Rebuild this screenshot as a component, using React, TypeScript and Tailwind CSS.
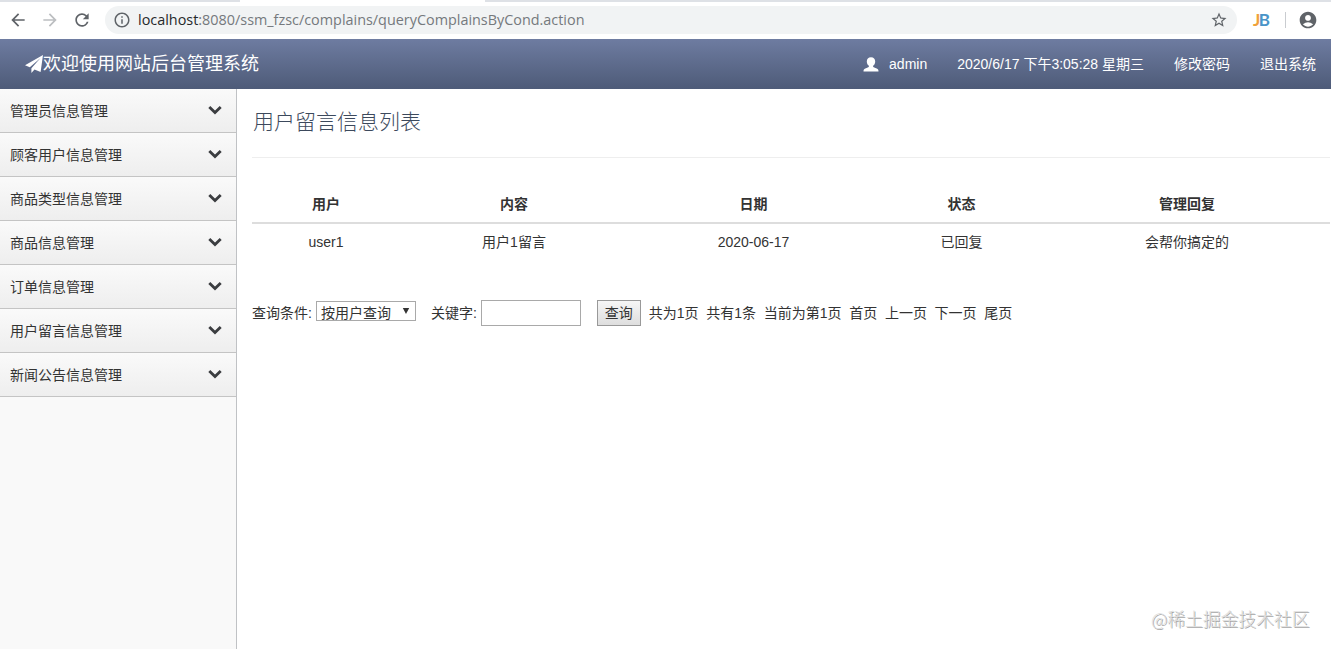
import {
  MdAccountCircle,
  MdArrowBack,
  MdArrowForward,
  MdInfoOutline,
  MdRefresh,
  MdStarBorder,
} from "react-icons/md";

const menus = [
  "管理员信息管理",
  "顾客用户信息管理",
  "商品类型信息管理",
  "商品信息管理",
  "订单信息管理",
  "用户留言信息管理",
  "新闻公告信息管理",
];

const pager = ["共为1页", "共有1条", "当前为第1页", "首页", "上一页", "下一页", "尾页"];

const rows = [["user1", "用户1留言", "2020-06-17", "已回复", "会帮你搞定的"]];

const BrowserBar = () => (
  <div className="h-[39px] shrink-0 bg-white">
    <div className="flex h-[2px]">
      <div className="w-[240px] bg-[#dee1e6]" />
      <div className="w-[245px] bg-white" />
      <div className="flex-1 bg-[#dee1e6]" />
    </div>
    <div className="flex h-9 items-center text-[#5f6368]">
      <MdArrowBack className="ml-2 size-5 shrink-0" />
      <MdArrowForward className="ml-3 size-5 shrink-0 text-[#bcbec1]" />
      <MdRefresh className="ml-3 size-5 shrink-0" />
      <div className="ml-[13px] flex h-7 w-[1132px] items-center rounded-full bg-[#f1f3f4] pl-2 pr-[9px]">
        <MdInfoOutline className="size-[18px] shrink-0" />
        <span className="ml-[7px] whitespace-nowrap font-['Open_Sans',sans-serif] text-[14.4px] text-[#75797d]">
          <span className="text-[#26282b]">localhost</span>
          :8080/ssm_fzsc/complains/queryComplainsByCond.action
        </span>
        <MdStarBorder className="ml-auto size-[18px] shrink-0" />
      </div>
      <div className="mb-0.5 ml-4 flex w-4 font-['Lato',sans-serif] text-[17px] font-bold leading-none tracking-[-1.5px]">
        <span className="text-[#f0a13a]">J</span>
        <span className="text-[#4a94c8]">B</span>
      </div>
      <div className="ml-4 h-4 w-px bg-[#c9ccd0]" />
      <MdAccountCircle className="ml-3 size-5 shrink-0" />
    </div>
  </div>
);

const SendIcon = () => (
  <svg viewBox="0 0 18 18" className="h-[18px] w-[18px]" fill="currentColor">
    <path d="M18 0 0 10.300l4.800 2L15.500 3.100 6.400 13.200V18l3.100-3.500L15.600 17z" />
  </svg>
);

const UserIcon = () => (
  <svg viewBox="0 0 16 15" className="h-[15px] w-4" fill="currentColor">
    <path d="M8 .3C5.300.3 3.800 2 3.800 4.400c0 2 .8 3.300 1.900 4.200.5.600.3 1.300-.4 1.600L1.800 11.800C.8 12.300.5 13 .5 14.500h15c0-1.500-.3-2.200-1.300-2.700l-3.500-1.600c-.7-.3-.9-1-.4-1.600 1.100-.9 1.900-2.200 1.900-4.200C12.200 2 10.700.3 8 .3z" />
  </svg>
);

const Chevron = () => (
  <svg viewBox="0 0 14 10" className="mb-0.5 mr-[14px] h-2.5 w-3.5" fill="none" stroke="#3b3d40" strokeWidth="2.800">
    <path d="M1.300 2 7 7.600 12.700 2" />
  </svg>
);

const App = () => (
  <div className="flex h-[649px] w-[1331px] flex-col overflow-hidden bg-white font-['Liberation_Sans','Noto_Sans_CJK_SC',sans-serif] text-sm text-[#333]">
    <BrowserBar />
    <header className="flex h-[50px] shrink-0 items-center bg-linear-to-b from-[#6e7ca1] to-[#4e5b78] pl-[25px] pr-[15px] text-white">
      <SendIcon />
      <span className="text-[18px] leading-none">欢迎使用网站后台管理系统</span>
      <div className="ml-auto flex items-center">
        <UserIcon />
        <span className="ml-[10px]">admin</span>
        <span className="ml-[30px]">2020/6/17 下午3:05:28 星期三</span>
        <a className="ml-[30px]">修改密码</a>
        <a className="ml-[30px]">退出系统</a>
      </div>
    </header>

    <div className="flex min-h-0 flex-1">
      <aside className="w-[237px] shrink-0 border-r border-[#c0c2c5] bg-[#f9f9f9]">
        {menus.map((m) => (
          <div
            key={m}
            className="flex h-11 items-center justify-between border-b border-[#c4c4c4] bg-linear-to-b from-[#fafafa] to-[#eee] pl-[10px]"
          >
            <span>{m}</span>
            <Chevron />
          </div>
        ))}
      </aside>

      <main className="min-w-0 flex-1 pl-[15px] pr-px">
        <h1 className="h-[69px] border-b border-[#eee] pl-px pt-[17px] text-[21px] font-light leading-8 text-[#3c495c]">
          用户留言信息列表
        </h1>

        <table className="mt-[27px] w-full table-fixed text-center">
          <colgroup>
            <col className="w-[148px]" />
            <col className="w-[228px]" />
            <col className="w-[251px]" />
            <col className="w-[165px]" />
            <col />
          </colgroup>
          <thead>
            <tr className="h-[38px] border-b-2 border-[#ddd]">
              <th>用户</th>
              <th>内容</th>
              <th>日期</th>
              <th>状态</th>
              <th>管理回复</th>
            </tr>
          </thead>
          <tbody>
            {rows.map((row) => (
              <tr key={row[0]} className="h-[37px]">
                {row.map((cell) => (
                  <td key={cell}>{cell}</td>
                ))}
              </tr>
            ))}
          </tbody>
        </table>

        <div className="mt-[39px] flex h-[27px] items-center whitespace-nowrap">
          <span>查询条件:</span>
          <div className="mb-1 ml-[4px] flex h-5 w-[100px] items-center justify-between border border-[#a9a9a9] pl-[4px] pr-[5px]">
            <span className="pt-1 leading-4">按用户查询</span>
            <svg viewBox="0 0 8 6" className="h-1.5 w-2" fill="#333">
              <path d="M.8 0h6.400L4 6z" />
            </svg>
          </div>
          <span className="ml-[15px]">关键字:</span>
          <input className="ml-[4px] h-[26px] w-[100px] border border-[#a9a9a9] bg-white" />
          <button className="ml-4 h-[26px] w-11 border border-[#999] bg-linear-to-b from-[#f6f6f6] to-[#dedede]">
            查询
          </button>
          <div className="ml-2 flex gap-[7.7px]">
            {pager.map((p) => (
              <span key={p}>{p}</span>
            ))}
          </div>
        </div>
      </main>
    </div>

    <div className="absolute left-[1151px] top-[606px] whitespace-nowrap font-['Noto_Sans_CJK_SC',sans-serif] text-[17.8px] font-light leading-6 text-[#dedede] [text-shadow:1px_1px_0_#a6a6a6]">
      @稀土掘金技术社区
    </div>
  </div>
);

export default App;
